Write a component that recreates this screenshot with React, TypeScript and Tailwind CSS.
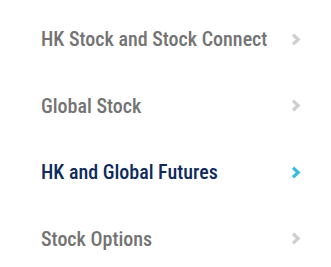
import React from 'react';

const items = [
  { label: 'HK Stock and Stock Connect', active: false },
  { label: 'Global Stock', active: false },
  { label: 'HK and Global Futures', active: true },
  { label: 'Stock Options', active: false },
];

function Chevron({ active }: { active: boolean }) {
  return (
    <svg width="10" height="13" viewBox="0 0 10 13" className={active ? 'text-[#3bbcd8]' : 'text-[#cfcfcf]'}>
      <path d="M2 1.8 L7.2 6.5 L2 11.2" fill="none" stroke="currentColor" strokeWidth="3.2" strokeLinejoin="miter" />
    </svg>
  );
}

export default function App() {
  return (
    <div className="w-[331px] h-[267px] bg-white pt-[6px]" style={{ fontFamily: '"Roboto Condensed", Roboto, sans-serif' }}>
      <ul className="flex flex-col">
        {items.map((item) => (
          <li key={item.label} className="flex items-center justify-between h-[66.5px] pl-[41px] pr-[30px]">
            <span className={`text-[20px] font-medium whitespace-nowrap ${item.active ? 'text-[#0e2b5c]' : 'text-[#737373]'}`}>
              {item.label}
            </span>
            <Chevron active={item.active} />
          </li>
        ))}
      </ul>
    </div>
  );
}
